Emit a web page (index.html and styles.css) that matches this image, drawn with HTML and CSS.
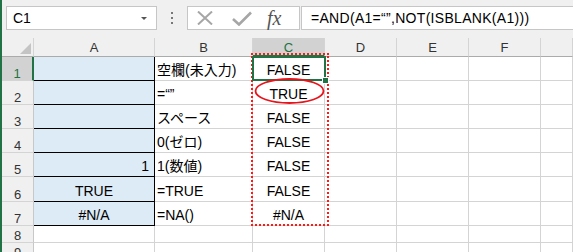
FILE: index.html
```html
<!DOCTYPE html>
<html lang="ja">
<head>
  <meta charset="UTF-8" />
  <title>ISBLANK</title>
  <link rel="stylesheet" href="styles.css">
</head>
<body>
  <div class="app">
    <div class="toolbar">
      <div class="namebox"><span>C1</span><i class="caret"></i></div>
      <div class="grip"><i></i><i></i><i></i></div>
      <div class="fxbox">
        <svg class="icon-x" width="16" height="14" viewBox="0 0 16 14"><path d="M1 0.5 L15 13.5 M15 0.5 L1 13.5" stroke="#a6a6a6" stroke-width="2" fill="none"/></svg>
        <svg class="icon-ok" width="20" height="15" viewBox="0 0 20 15"><polyline points="1,8 7,13.5 19,1.5" stroke="#a6a6a6" stroke-width="2.6" fill="none"/></svg>
        <span class="fx">fx</span>
      </div>
      <div class="formula">=AND(A1=“”,NOT(ISBLANK(A1)))</div>
    </div>

    <div class="sheet">
      <div class="hd corner"><i></i></div>
      <div class="hd col">A</div>
      <div class="hd col">B</div>
      <div class="hd col active">C</div>
      <div class="hd col">D</div>
      <div class="hd col">E</div>
      <div class="hd col">F</div>
      <div class="hd col"></div>

      <div class="hd row active">1</div>
      <div class="cell blue"></div>
      <div class="cell">空欄(未入力)</div>
      <div class="cell mid">FALSE</div>
      <div class="cell"></div><div class="cell"></div><div class="cell"></div><div class="cell"></div>

      <div class="hd row">2</div>
      <div class="cell blue"></div>
      <div class="cell">=“”</div>
      <div class="cell mid">TRUE</div>
      <div class="cell"></div><div class="cell"></div><div class="cell"></div><div class="cell"></div>

      <div class="hd row">3</div>
      <div class="cell blue"></div>
      <div class="cell">スペース</div>
      <div class="cell mid">FALSE</div>
      <div class="cell"></div><div class="cell"></div><div class="cell"></div><div class="cell"></div>

      <div class="hd row">4</div>
      <div class="cell blue"></div>
      <div class="cell">0(ゼロ)</div>
      <div class="cell mid">FALSE</div>
      <div class="cell"></div><div class="cell"></div><div class="cell"></div><div class="cell"></div>

      <div class="hd row">5</div>
      <div class="cell blue end">1</div>
      <div class="cell">1(数値)</div>
      <div class="cell mid">FALSE</div>
      <div class="cell"></div><div class="cell"></div><div class="cell"></div><div class="cell"></div>

      <div class="hd row">6</div>
      <div class="cell blue mid">TRUE</div>
      <div class="cell">=TRUE</div>
      <div class="cell mid">FALSE</div>
      <div class="cell"></div><div class="cell"></div><div class="cell"></div><div class="cell"></div>

      <div class="hd row">7</div>
      <div class="cell blue mid">#N/A</div>
      <div class="cell">=NA()</div>
      <div class="cell mid">#N/A</div>
      <div class="cell"></div><div class="cell"></div><div class="cell"></div><div class="cell"></div>

      <div class="hd row">8</div>
      <div class="cell"></div><div class="cell"></div><div class="cell"></div>
      <div class="cell"></div><div class="cell"></div><div class="cell"></div><div class="cell"></div>

      <div class="hd row">9</div>
      <div class="cell"></div><div class="cell"></div><div class="cell"></div>
      <div class="cell"></div><div class="cell"></div><div class="cell"></div><div class="cell"></div>

      <!-- overlays -->
      <div class="copy-range"></div>
      <div class="selection"></div>
      <div class="handle"></div>
      <svg class="mark" width="72" height="28" viewBox="0 0 72 28"><ellipse cx="35.5" cy="14" rx="34" ry="12" stroke="#e8141b" stroke-width="1.8" fill="none"/></svg>
    </div>
  </div>
</body>
</html>
```

FILE: styles.css
```css
body {
  margin: 0;
  background: #fff;
}

.app {
  width: 573px;
  height: 252px;
  overflow: hidden;
  box-sizing: border-box;
  border-left: 2px solid #217346;
  font-family: "Liberation Sans", "Noto Sans CJK JP", sans-serif;
  color: #000;
}

/* formula bar */
.toolbar {
  height: 38px;
  box-sizing: border-box;
  padding: 6px 0 0 4px;
  background: #f0f0f0;
  display: flex;
  align-items: flex-start;
}

.namebox {
  width: 151px;
  height: 24px;
  box-sizing: border-box;
  border: 1px solid #c6c6c6;
  background: #fff;
  display: flex;
  align-items: center;
  justify-content: space-between;
  padding: 0 9px 0 6px;
  font-size: 14px;
}

.caret {
  width: 0;
  height: 0;
  border-left: 3px solid transparent;
  border-right: 3px solid transparent;
  border-top: 3px solid #555;
}

.grip {
  width: 30px;
  height: 24px;
  display: flex;
  flex-direction: column;
  align-items: center;
  justify-content: center;
  gap: 3px;
}

.grip i {
  width: 2px;
  height: 2px;
  background: #777;
}

.fxbox {
  width: 113px;
  height: 24px;
  box-sizing: border-box;
  border: 1px solid #c6c6c6;
  background: #fff;
  display: flex;
  align-items: center;
}

.icon-x {
  margin-left: 9px;
}

.icon-ok {
  margin-left: 19px;
  margin-top: 1px;
}

.fx {
  margin-left: 15px;
  font-family: "Liberation Serif", serif;
  font-style: italic;
  font-size: 20px;
  color: #555;
  line-height: 22px;
}

.formula {
  flex: 1;
  height: 24px;
  margin-left: 1px;
  box-sizing: border-box;
  border: 1px solid #c6c6c6;
  border-right: none;
  background: #fff;
  padding-left: 9px;
  font-size: 14px;
  line-height: 22px;
  letter-spacing: 0.3px;
  white-space: nowrap;
}

/* sheet */
.sheet {
  position: relative;
  display: grid;
  grid-template-columns: 32px 121px 98px 72px 72px 72px 72px 1fr;
  grid-template-rows: 19px 24px 24px 24px 24px 24px 25px 24px 17px 17px;
}

.hd {
  background: #f0f0f0;
  color: #333;
  font-size: 13px;
  box-sizing: border-box;
  display: flex;
  justify-content: center;
}

.hd.col {
  align-items: center;
  border-right: 1px solid #d4d4d4;
  border-bottom: 1px solid #ababab;
  padding-top: 1px;
}

.hd.row {
  align-items: flex-end;
  line-height: 13px;
  border-right: 1px solid #c8c8c8;
  border-bottom: 1px solid #d4d4d4;
}

.hd.active {
  background: #d2d2d2;
  color: #217346;
}

.hd.col.active {
  border-bottom: 2px solid #217346;
}

.hd.row.active {
  border-right: 2px solid #217346;
}

.corner {
  position: relative;
  border-right: 1px solid #d4d4d4;
  border-bottom: 1px solid #ababab;
}

.corner i {
  position: absolute;
  right: 2px;
  bottom: 2px;
  width: 0;
  height: 0;
  border-left: 11px solid transparent;
  border-bottom: 11px solid #c4c4c4;
}

.cell {
  box-sizing: border-box;
  border-right: 1px solid #d4d4d4;
  border-bottom: 1px solid #d4d4d4;
  font-size: 14px;
  line-height: 14px;
  padding: 0 2px 3px;
  display: flex;
  align-items: flex-end;
  white-space: nowrap;
}

.cell.mid {
  justify-content: center;
}

.cell.end {
  justify-content: flex-end;
  padding-right: 5px;
}

.cell.blue {
  background: #ddebf7;
  border-right-color: #000;
  border-bottom-color: #000;
}

/* overlays on the grid */
.copy-range {
  position: absolute;
  left: 249px;
  top: 15px;
  width: 78px;
  height: 173px;
  box-sizing: border-box;
  border: 2px dotted #ff1a1a;
}

.selection {
  position: absolute;
  left: 250px;
  top: 18px;
  width: 74px;
  height: 25px;
  box-sizing: border-box;
  border: 2px solid #217346;
}

.handle {
  position: absolute;
  left: 320px;
  top: 39px;
  width: 5px;
  height: 5px;
  background: #217346;
  border: 1px solid #fff;
}

.mark {
  position: absolute;
  left: 252px;
  top: 39px;
}
```
